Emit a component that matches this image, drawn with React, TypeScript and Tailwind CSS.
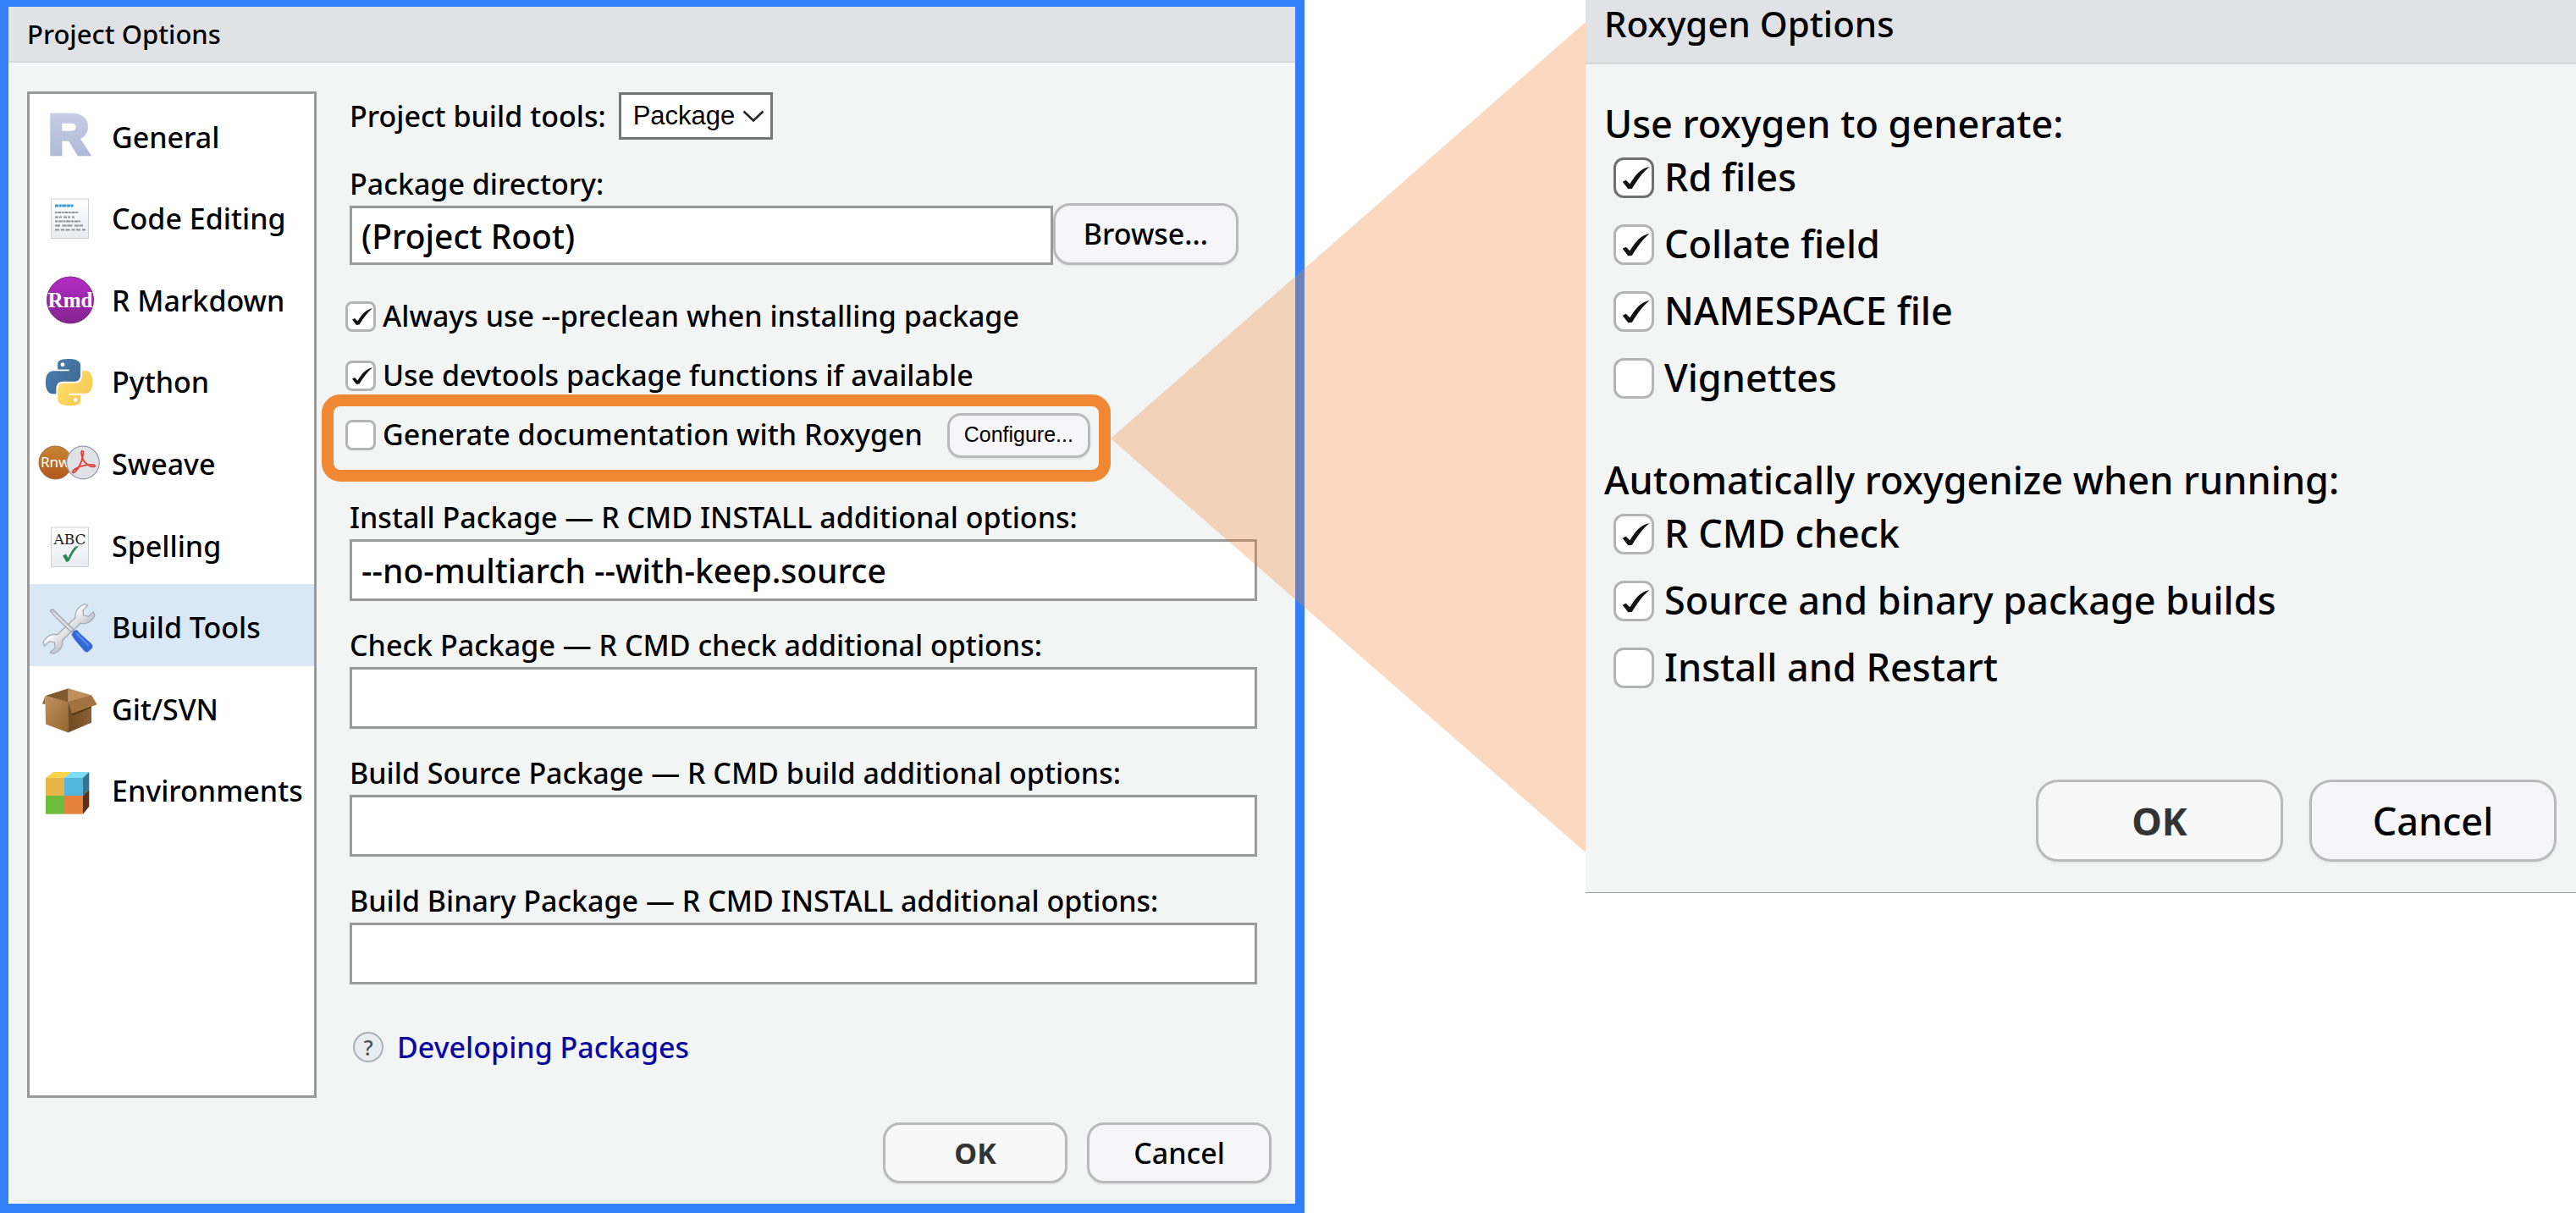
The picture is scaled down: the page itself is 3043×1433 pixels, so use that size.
import type { ReactNode } from "react";

/* ---------- sidebar icons ---------- */

function Icon({ children }: { children: ReactNode }) {
  return (
    <svg viewBox="0 0 76 76" className="size-[76px] shrink-0 overflow-visible" aria-hidden="true">
      {children}
    </svg>
  );
}

function GeneralIcon() {
  return (
    <Icon>
      <defs>
        <linearGradient id="general-fill" x1="0" y1="0" x2="0" y2="1">
          <stop offset="0" stopColor="#cdd1e6" />
          <stop offset="1" stopColor="#a9b6d6" />
        </linearGradient>
      </defs>
      <text
        x="13"
        y="58"
        fontSize="67"
        fontFamily="Liberation Sans"
        fontWeight="700"
        fill="url(#general-fill)"
        stroke="url(#general-fill)"
        strokeWidth="4.5"
      >
        R
      </text>
    </Icon>
  );
}

function Sheet({ y }: { y: number }) {
  return (
    <>
      <defs>
        <linearGradient id="sheet-fill" x1="0" y1="0" x2="0" y2="1">
          <stop offset="0" stopColor="#ffffff" />
          <stop offset="1" stopColor="#e9ebf1" />
        </linearGradient>
      </defs>
      <rect x="16.5" y={y} width="44" height="46.5" fill="url(#sheet-fill)" stroke="#cfd1d6" />
    </>
  );
}

function CodeIcon() {
  return (
    <Icon>
      <Sheet y={14} />
      <path d="M21 22h22" stroke="#3a9bd0" strokeWidth="3.2" strokeDasharray="4 .7 3 .6 5 .6" />
      <g stroke="#8d909b" strokeWidth="2.2">
        <path d="M21 30h28" strokeDasharray="2.5 .8 4 .8" />
        <path d="M21 35.5h23" strokeDasharray="4 1 3 2" />
        <path d="M21 40.5h30" strokeDasharray="3 .7 5 .7" />
        <path d="M21 45.5h33" strokeDasharray="6 2.5 5 .8" />
        <path d="M21 50.5h36" strokeDasharray="5 2 4 1.5" />
      </g>
    </Icon>
  );
}

function MarkdownIcon() {
  return (
    <Icon>
      <defs>
        <linearGradient id="rmd-fill" x1="0" y1="0" x2="0" y2="1">
          <stop offset="0" stopColor="#b32cc4" />
          <stop offset="1" stopColor="#84248f" />
        </linearGradient>
      </defs>
      <circle cx="39" cy="37.5" r="27.5" fill="url(#rmd-fill)" stroke="#7d2a88" strokeWidth="1" />
      <text x="39" y="46" textAnchor="middle" fontSize="25" fontFamily="Liberation Serif" fontWeight="700" fill="#fff">
        Rmd
      </text>
    </Icon>
  );
}

const SNAKE =
  "M14.25.18l.9.2.73.26.59.3.45.32.34.34.25.34.16.33.1.3.04.26.02.2-.01.13V8.5l-.05.63-.13.55-.21.46-.26.38-.3.31-.33.25-.35.19-.35.14-.33.1-.3.07-.26.04-.21.02H8.77l-.69.05-.59.14-.5.22-.41.27-.33.32-.27.35-.2.36-.15.37-.1.35-.07.32-.04.27-.02.21v3.06H3.17l-.21-.03-.28-.07-.32-.12-.35-.18-.36-.26-.36-.36-.35-.46-.32-.59-.28-.73-.21-.88-.14-1.05-.05-1.23.06-1.22.16-1.04.24-.87.32-.71.36-.57.4-.44.42-.33.42-.24.4-.16.36-.1.32-.05.24-.01h.16l.06.01h8.16v-.83H6.18l-.01-2.75-.02-.37.05-.34.11-.31.17-.28.25-.26.31-.23.38-.2.44-.18.51-.15.58-.12.64-.1.71-.06.77-.04.84-.02 1.27.05zm-6.3 1.98l-.23.33-.08.41.08.41.23.34.33.22.41.09.41-.09.33-.22.23-.34.08-.41-.08-.41-.23-.33-.33-.22-.41-.09-.41.09z";

function PythonIcon() {
  return (
    <Icon>
      <defs>
        <linearGradient id="py-blue" x1="0" y1="0" x2="1" y2="1">
          <stop offset="0" stopColor="#4a80b8" />
          <stop offset="1" stopColor="#3e6589" />
        </linearGradient>
        <linearGradient id="py-yellow" x1="1" y1="1" x2="0" y2="0">
          <stop offset="0" stopColor="#ffe272" />
          <stop offset="1" stopColor="#f5c44b" />
        </linearGradient>
      </defs>
      <g transform="translate(10 10) scale(2.3)">
        <path d={SNAKE} fill="url(#py-blue)" />
        <path d={SNAKE} transform="rotate(180 12 12)" fill="url(#py-yellow)" />
      </g>
    </Icon>
  );
}

function SweaveIcon() {
  return (
    <Icon>
      <defs>
        <linearGradient id="rnw-fill" x1="0" y1="0" x2="0" y2="1">
          <stop offset="0" stopColor="#c78632" />
          <stop offset="1" stopColor="#b4561d" />
        </linearGradient>
      </defs>
      <circle cx="21.5" cy="36.5" r="19.5" fill="url(#rnw-fill)" stroke="#a06a3c" strokeWidth="1" />
      <text x="4" y="42" fontSize="17" fontFamily="Noto Sans" fontWeight="400" fill="#fff">
        Rnw
      </text>
      <circle cx="54" cy="36.5" r="19.3" fill="#e1e2e7" stroke="#8e97ab" strokeWidth="1.2" />
      <path
        d="M52.5 23c1.5-1 2.5 1 1.6 4.500-.8 4-1.800 8-3.600 11.500-2 4-4.500 8.500-7.500 9.500-2 .5-1.800-2 1-4 4-2.800 10-4.500 15-5.300 4-.6 9-.5 9.200 1.300 0 1.500-4 1.200-7-.6-3.500-2-7-6-8-9.500-.9-3-1.500-6.500-.7-7.400z"
        fill="none"
        stroke="#dc4238"
        strokeWidth="1.8"
      />
    </Icon>
  );
}

function SpellingIcon() {
  return (
    <Icon>
      <Sheet y={16} />
      <text x="38.5" y="36" textAnchor="middle" fontSize="17" fontFamily="DejaVu Serif" fontWeight="400" fill="#222">
        ABC
      </text>
      <path d="M30 49.5l4-2 2.5 4.5C39 46 42 41 45.5 38.5l3.500-.5C44 43 40.500 49 37.500 56l-3 1z" fill="#2f8757" />
    </Icon>
  );
}

function ToolsIcon() {
  return (
    <Icon>
      <defs>
        <linearGradient id="steel" x1="0" y1="0" x2="0" y2="1">
          <stop offset="0" stopColor="#ffffff" />
          <stop offset="1" stopColor="#c4c6cc" />
        </linearGradient>
      </defs>
      <g transform="translate(37.5 39) rotate(-43)">
        <path
          d="M-15-4.500L15-4.500C18-10 26-12.500 34-8.500L35-5L27-5L23.500 0L27 5L35 5L33 9C26 12.500 18 10 15 4.500L-15 4.500C-18 10-26 12.500-34 8.500L-35 5L-27 5L-23.500 0L-27-5L-35-5L-33-9C-26-12.500-18-10-15-4.500z"
          fill="url(#steel)"
          stroke="#a3a7af"
          strokeWidth="1.2"
        />
      </g>
      <path d="M15 17.5l4-1.800 5 5.300 19 18.500-3 3.500L20.500 24z" fill="#c3c6cc" stroke="#93979f" strokeWidth="1" />
      <path d="M19 20l21 20" stroke="#e6e8ec" strokeWidth="1.5" />
      <path d="M40.5 46l2.500-5 4-.8 3.500 4L64 56.500c2 2 2 4-.5 6.500l-3.500 3c-1.500 1-3 .5-4-.5L44.500 52z" fill="#3468d8" />
      <path d="M46 44l15 15" stroke="#5d8df0" strokeWidth="2" />
    </Icon>
  );
}

function BoxIcon() {
  return (
    <Icon>
      <defs>
        <linearGradient id="box-left" x1="0" y1="0" x2="1" y2="1">
          <stop offset="0" stopColor="#c0915e" />
          <stop offset="1" stopColor="#94662f" />
        </linearGradient>
        <linearGradient id="box-right" x1="0" y1="0" x2="1" y2="0">
          <stop offset="0" stopColor="#6f4a22" />
          <stop offset="1" stopColor="#8c6034" />
        </linearGradient>
      </defs>
      <path d="M9.5 22L36.700 13.300V30z" fill="#80592f" />
      <path d="M36.7 13.300L64 21.300L36.700 30z" fill="#bd8f5b" />
      <path d="M9.5 22L6 31.500L9.500 32z" fill="#8e6437" />
      <path d="M9.3 22L36.500 29.500V65.500L10 55.500z" fill="url(#box-left)" />
      <path d="M36.3 29.500L64 21.300V53.700L36.300 65.500z" fill="url(#box-right)" />
      <path d="M37 32L41.500 45.500L64 36V33z" fill="#553514" />
      <path d="M36.3 29.500L64 21.300L70.700 32.300L41 43z" fill="#a2733f" />
    </Icon>
  );
}

function CubeIcon() {
  return (
    <Icon>
      <path d="M10 21.700L19.300 15H40.300L32 21.700z" fill="#f8d449" />
      <path d="M32 21.700L40.300 15H61.300L54 21.700z" fill="#7fdcf8" />
      <path d="M10 21.700H32V43H10z" fill="#e8b54b" />
      <path d="M32 21.700H54V43H32z" fill="#52b5db" />
      <path d="M10 43H32V64.700H10z" fill="#6cbd3b" />
      <path d="M32 43H54V64.700H32z" fill="#e5833d" />
      <path d="M54 21.700L61.300 15V35.700L54 43z" fill="#31768f" />
      <path d="M54 43L61.300 35.700V55.700L54 64.700z" fill="#5e3014" />
    </Icon>
  );
}

const SECTIONS = [
  { label: "General", icon: <GeneralIcon /> },
  { label: "Code Editing", icon: <CodeIcon /> },
  { label: "R Markdown", icon: <MarkdownIcon /> },
  { label: "Python", icon: <PythonIcon /> },
  { label: "Sweave", icon: <SweaveIcon /> },
  { label: "Spelling", icon: <SpellingIcon /> },
  { label: "Build Tools", icon: <ToolsIcon />, active: true },
  { label: "Git/SVN", icon: <BoxIcon /> },
  { label: "Environments", icon: <CubeIcon /> },
];

/* ---------- form controls ---------- */

function Check({ label, checked = false, large = false, focused = false }: { label: string; checked?: boolean; large?: boolean; focused?: boolean }) {
  return (
    <label className={large ? "flex h-[79px] items-center gap-3 whitespace-nowrap" : "flex h-[70px] items-center gap-2 whitespace-nowrap"}>
      <span className="grid shrink-0">
        <input
          type="checkbox"
          defaultChecked={checked}
          className={[
            "peer col-start-1 row-start-1 appearance-none border-[3px] bg-white",
            large ? "size-12 rounded-xl" : "size-9 rounded-lg",
            focused ? "border-[#6f6f6f]" : "border-[#b4b4b4]",
          ].join(" ")}
        />
        <svg
          viewBox="0 0 36 36"
          className={`pointer-events-none invisible col-start-1 row-start-1 peer-checked:visible ${large ? "size-12" : "size-9"}`}
          aria-hidden="true"
        >
          <path d="M8 21.5l3-1.500 3.500 3.500C19 16 24 9.500 32 8.200 26 13 21 20 16.500 27.500l-3.500.5z" fill="#111" />
        </svg>
      </span>
      <span className="pb-0.5">{label}</span>
    </label>
  );
}

function Button({ children, className }: { children: ReactNode; className: string }) {
  return (
    <button type="button" className={`border-[3px] border-[#bababa] shadow-[0_2px_2px_rgba(0,0,0,0.05)] ${className}`}>
      {children}
    </button>
  );
}

const FIELD = "w-full min-w-0 border-[3px] border-[#9a9a9a] bg-white px-[11px] text-[39px]";
const FIELD_LABEL = "block leading-[36px] whitespace-nowrap";

function TextField({ id, label, value = "" }: { id: string; label: string; value?: string }) {
  return (
    <div>
      <label htmlFor={id} className={FIELD_LABEL}>
        {label}
      </label>
      <input id={id} type="text" defaultValue={value} className={`${FIELD} mt-2 block h-[73px]`} />
    </div>
  );
}

function ProjectOptions() {
  return (
    <section className="flex flex-col border-t-8 border-r-[11px] border-b-[11px] border-l-10 border-[#3380f8] bg-[#f3f5f4] text-[34px] font-medium">
      <header className="border-b-2 border-[#d8d9dc] bg-[#e1e2e6] pl-[22px] text-[31px] leading-[64px]">Project Options</header>

      <div className="flex flex-1">
        <nav className="mt-[34px] ml-[22px] w-[342px] shrink-0 border-[3px] border-[#999] bg-white">
          <div className="grid h-[869px] grid-rows-9">
            {SECTIONS.map((s) => (
              <button
                key={s.label}
                type="button"
                className={
                  s.active
                    ? "flex w-full items-center gap-3 bg-[#dae7f5] pt-1.5 pl-[9px] whitespace-nowrap"
                    : "flex w-full items-center gap-3 pt-1.5 pl-[9px] whitespace-nowrap"
                }
              >
                {s.icon}
                {s.label}
              </button>
            ))}
          </div>
        </nav>

        <form className="min-w-0 flex-1 pt-[35px] pr-[45px] pb-[39px] pl-[39px]">
          <div className="flex items-center gap-[15px]">
            <label htmlFor="build-tools" className="whitespace-nowrap">
              Project build tools:
            </label>
            <div className="relative">
              <select
                id="build-tools"
                className="block h-14 w-[182px] appearance-none border-[3px] border-[#767676] bg-white pr-10 pl-3.5 font-[Liberation_Sans,sans-serif] text-[31px] font-normal"
              >
                <option>Package</option>
              </select>
              <svg viewBox="0 0 26 14" className="pointer-events-none absolute top-[21px] right-2.5 h-3.5 w-[26px]" aria-hidden="true">
                <path d="M1.5 1.500L13 12.500L24.500 1.500" fill="none" stroke="#222" strokeWidth="2.5" />
              </svg>
            </div>
          </div>

          <div className="mt-[34px]">
            <label htmlFor="package-dir" className={FIELD_LABEL}>
              Package directory:
            </label>
            <div className="mt-[5px] flex items-end pr-[22px]">
              <input id="package-dir" type="text" defaultValue="(Project Root)" className={`${FIELD} h-[70px] flex-1`} />
              <Button className="h-[73px] w-[219px] shrink-0 rounded-[20px] bg-[#f6f6f9]">Browse...</Button>
            </div>
          </div>

          <div className="mt-[26px] -ml-[5px]">
            <Check label="Always use --preclean when installing package" checked />
            <Check label="Use devtools package functions if available" checked />
            <div className="relative flex w-fit items-center gap-[29px]">
              <Check label="Generate documentation with Roxygen" />
              <Button className="h-[53px] w-[169px] rounded-2xl bg-[#f6f6f9] font-[Liberation_Sans,sans-serif] text-[25px] font-normal">Configure...</Button>
              <div className="pointer-events-none absolute -top-[13px] -right-6 -bottom-5 -left-7 rounded-[22px] border-14 border-[#ef8733]" />
            </div>
          </div>

          <div className="mt-11 flex flex-col gap-[34px]">
            <TextField id="install" label="Install Package — R CMD INSTALL additional options:" value="--no-multiarch --with-keep.source" />
            <TextField id="check" label="Check Package — R CMD check additional options:" />
            <TextField id="source" label="Build Source Package — R CMD build additional options:" />
            <TextField id="binary" label="Build Binary Package — R CMD INSTALL additional options:" />
          </div>

          <a href="#developing-packages" className="mt-[54px] ml-1 flex h-10 w-fit items-center gap-4 whitespace-nowrap text-[#0a0aa2]">
            <span className="flex size-9 items-center justify-center rounded-full border-2 border-[#a9b3bb] bg-[#e8edf1] text-[25px] leading-none text-[#45505a]">?</span>
            Developing Packages
          </a>
        </form>
      </div>

      <footer className="flex justify-end gap-[23px] pt-[29px] pr-7 pb-6">
        <Button className="h-[72px] w-[218px] rounded-[20px] bg-[#f8f8f8] font-bold text-[#333]">OK</Button>
        <Button className="h-[72px] w-[218px] rounded-[20px] bg-[#f6f6f9]">Cancel</Button>
      </footer>
    </section>
  );
}

function RoxygenOptions() {
  return (
    <section className="self-start border-b border-[#9a9ba6] bg-[#f3f5f4] text-[45px] font-medium">
      <header className="border-b-[3px] border-[#d8d9dc] bg-[#e1e2e6] pb-[17px] pl-[22px] text-[42px] leading-[56px]">Roxygen Options</header>

      <form className="pt-[46px] pr-[23px] pb-9 pl-[22px]">
        <fieldset>
          <legend className="leading-[48px] whitespace-nowrap">Use roxygen to generate:</legend>
          <div className="pl-[11px]">
            <Check large label="Rd files" checked focused />
            <Check large label="Collate field" checked />
            <Check large label="NAMESPACE file" checked />
            <Check large label="Vignettes" />
          </div>
        </fieldset>

        <fieldset className="mt-[57px]">
          <legend className="leading-[48px] whitespace-nowrap">Automatically roxygenize when running:</legend>
          <div className="pl-[11px]">
            <Check large label="R CMD check" checked />
            <Check large label="Source and binary package builds" checked />
            <Check large label="Install and Restart" />
          </div>
        </fieldset>

        <div className="mt-[93px] flex justify-end gap-[31px]">
          <Button className="h-[97px] w-[292px] rounded-[26px] bg-[#f8f8f8] font-bold text-[#333]">OK</Button>
          <Button className="h-[97px] w-[292px] rounded-[26px] bg-[#f6f6f9]">Cancel</Button>
        </div>
      </form>
    </section>
  );
}

export default function App() {
  return (
    <main className="grid min-h-screen grid-cols-[1541fr_332fr_1170fr] overflow-hidden bg-white font-['Noto_Sans',sans-serif] text-black">
      <ProjectOptions />
      <div className="relative">
        <svg viewBox="0 0 560 981" preserveAspectRatio="none" className="pointer-events-none absolute top-[26px] right-0 h-[981px] w-[169%]" aria-hidden="true">
          <path d="M0 492L560 0V981z" fill="#ee8433" fillOpacity="0.31" />
        </svg>
      </div>
      <RoxygenOptions />
    </main>
  );
}
